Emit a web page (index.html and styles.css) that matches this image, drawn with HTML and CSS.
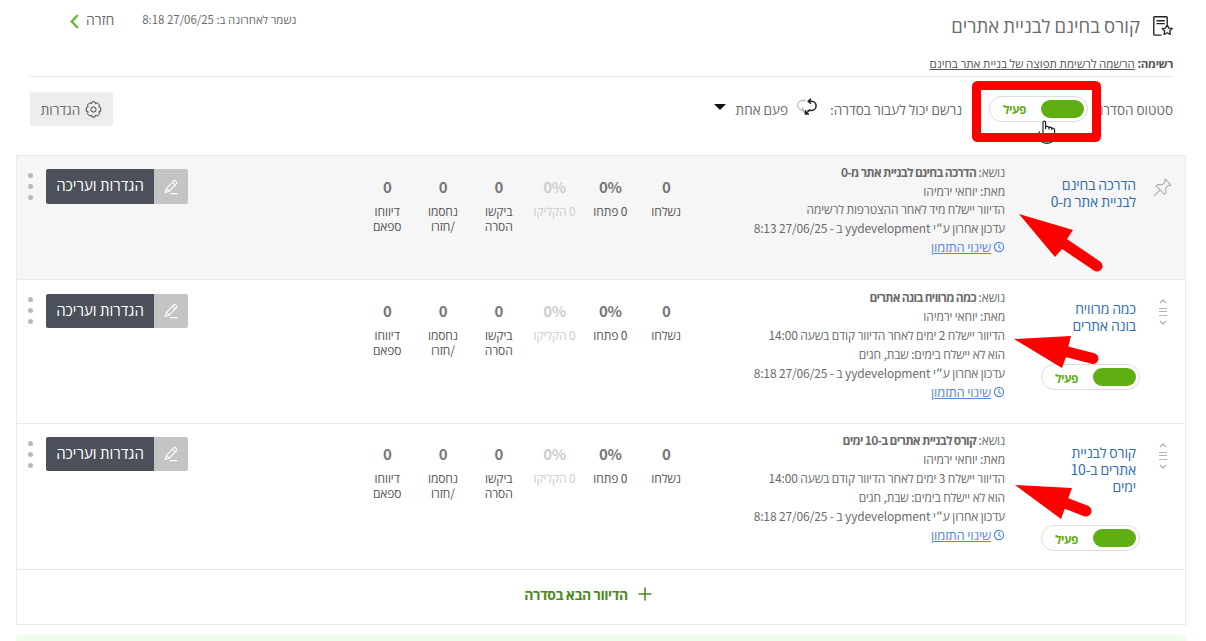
FILE: index.html
```html
<!DOCTYPE html>
<html lang="he" dir="rtl">
<head>
  <meta charset="UTF-8">
  <meta name="viewport" content="width=device-width, initial-scale=1.0">
  <link rel="stylesheet" href="styles.css">
  <title>קורס בחינם לבניית אתרים</title>
</head>
<body>
  <svg class="defs" width="0" height="0">
    <symbol id="pencil" viewBox="0 0 16 16">
      <path d="M3.3 9.6 10.6 1.8q.8-.8 1.7 0l1.2 1.1q.8.8 0 1.7L6.2 12.2 2 13.6zM3.3 9.6l2.9 2.6M9.4 3.2l2.8 2.6M7 14.6h7.5" fill="none" stroke="#fff" stroke-width="1.1" stroke-linejoin="round" />
    </symbol>
    <symbol id="clock" viewBox="0 0 12 12">
      <circle cx="6" cy="6" r="4.6" fill="none" stroke="#4f8bd6" stroke-width="1.2" />
      <path d="M6 3v3.4l2 1" fill="none" stroke="#4f8bd6" stroke-width="1.1" />
    </symbol>
    <symbol id="drag" viewBox="0 0 10 26">
      <path d="M2 4l3-3 3 3M2 22l3 3 3-3" fill="none" stroke="#aaa" stroke-width="1.1" />
      <path d="M1 9.5h8M1 12.5h8M1 16.5h8" fill="none" stroke="#b5b5b5" stroke-width="1" />
    </symbol>
  </svg>

  <div class="header">
    <div class="header-top">
      <svg class="page-icon" viewBox="0 0 19 21">
        <path d="M13.5 8V1.5q0-.8-.8-.8H1.5q-.8 0-.8.8v16q0 .8.8.8H8M3.3 4.5h7.8M3.3 7.3h7.8" fill="none" stroke="#222" stroke-width="1.3" />
        <path d="M13.500 8.500l1.500 3 3.300.5-2.400 2.300.6 3.300-3-1.600-3 1.600.6-3.300L8.700 12l3.300-.5z" fill="#fff" stroke="#222" stroke-width="1.200" stroke-linejoin="round" />
      </svg>
      <h1 class="title">קורס בחינם לבניית אתרים</h1>
      <div class="saved">נשמר לאחרונה ב: 27/06/25 8:18</div>
      <a class="back">חזרה
        <svg width="9" height="15" viewBox="0 0 9 15"><path d="M7.800 1 1.800 7.500l6 6.500" fill="none" stroke="#6fb544" stroke-width="2.500" /></svg>
      </a>
    </div>
    <div class="list-name"><b>רשימה:</b> <u>הרשמה לרשימת תפוצה של בניית אתר בחינם</u></div>
    <div class="status-bar">
      <span class="status-label">סטטוס הסדרה:</span>
      <div class="toggle"><i></i><span>פעיל</span></div>
      <span class="pass-label">נרשם יכול לעבור בסדרה:</span>
      <svg class="repeat" viewBox="0 0 20 17">
        <path d="M9 2.500H5.500a4.700 4.700 0 0 0 0 9.500h1.500M6 9l-1 3 3 3" fill="none" stroke="#b8bcc2" stroke-width="1.300" />
        <path d="M14 .8 11.200 3.200 14 5.800M11.500 3.200h3a4.600 4.600 0 0 1 0 9.200H10.500M13 11.500l-4.500 4.500M8.500 12v4h3.500" fill="none" stroke="#222" stroke-width="1.500" />
      </svg>
      <span class="once">פעם אחת</span>
      <span class="caret"></span>
      <a class="settings">
        <svg width="17" height="17" viewBox="0 0 17 17">
          <path d="M7.100 .2h2.800l.6 1.800 1.800-.8 2.300 2.300-.8 1.800 1.900.7v3.600l-1.900.6.8 1.900-2.300 2.300-1.800-.8-.6 1.900H7.100l-.6-1.900-1.800.8-2.300-2.300.8-1.900L1.300 9.600V6l1.900-.7-.8-1.800 2.300-2.300 1.800.8z" transform="translate(0 .6)" fill="none" stroke="#444" stroke-width="1" stroke-linejoin="round" />
          <circle cx="8.500" cy="8.500" r="2.600" fill="none" stroke="#444" />
        </svg>
        הגדרות
      </a>
    </div>
  </div>

  <div class="series">
    <div class="row first">
      <div class="handle">
        <svg class="pin" viewBox="0 0 18 18"><path d="M11.500 1l5.500 5.500-1.300.7-1.200-.3-2.600 3.200.3 4.200-1.300 1.200L3 7.500l1.200-1.300 4.300.3 3-2.700-.4-1.500zM6.500 11.500 1 17" fill="none" stroke="#aaa" stroke-width="1" /></svg>
      </div>
      <div class="name"><a>הדרכה בחינם<br>לבניית אתר מ-0</a></div>
      <div class="details">
        <p>נושא: <b>הדרכה בחינם לבניית אתר מ-0</b></p>
        <p>מאת: יוחאי ירמיהו</p>
        <p>הדיוור יישלח מיד לאחר ההצטרפות לרשימה</p>
        <p>עדכון אחרון ע״י yydevelopment ב - 27/06/25 8:13</p>
        <p class="timing"><svg width="12" height="12"><use href="#clock" /></svg><a>שינוי התזמון</a></p>
      </div>
      <div class="stats">
        <div><strong>0</strong>נשלחו</div>
        <div><strong>0%</strong>0 פתחו</div>
        <div class="off"><strong>0%</strong>0 הקליקו</div>
        <div><strong>0</strong>ביקשו<br>הסרה</div>
        <div><strong>0</strong>נחסמו<br>/חזרו</div>
        <div><strong>0</strong>דיווחו<br>ספאם</div>
      </div>
      <div class="actions">
        <a class="edit"><span class="edit-icon"><svg width="16" height="16"><use href="#pencil" /></svg></span><span class="edit-text">הגדרות ועריכה</span></a>
        <div class="dots"><i></i><i></i><i></i></div>
      </div>
    </div>

    <div class="row second">
      <div class="handle"><svg class="drag" viewBox="0 0 10 26"><use href="#drag" /></svg></div>
      <div class="name"><a>כמה מרוויח<br>בונה אתרים</a>
        <div class="toggle"><i></i><span>פעיל</span></div>
      </div>
      <div class="details">
        <p>נושא: <b>כמה מרוויח בונה אתרים</b></p>
        <p>מאת: יוחאי ירמיהו</p>
        <p>הדיוור יישלח 2 ימים לאחר הדיוור קודם בשעה 14:00</p>
        <p>הוא לא יישלח בימים: שבת, חגים</p>
        <p>עדכון אחרון ע״י yydevelopment ב - 27/06/25 8:18</p>
        <p class="timing"><svg width="12" height="12"><use href="#clock" /></svg><a>שינוי התזמון</a></p>
      </div>
      <div class="stats">
        <div><strong>0</strong>נשלחו</div>
        <div><strong>0%</strong>0 פתחו</div>
        <div class="off"><strong>0%</strong>0 הקליקו</div>
        <div><strong>0</strong>ביקשו<br>הסרה</div>
        <div><strong>0</strong>נחסמו<br>/חזרו</div>
        <div><strong>0</strong>דיווחו<br>ספאם</div>
      </div>
      <div class="actions">
        <a class="edit"><span class="edit-icon"><svg width="16" height="16"><use href="#pencil" /></svg></span><span class="edit-text">הגדרות ועריכה</span></a>
        <div class="dots"><i></i><i></i><i></i></div>
      </div>
    </div>

    <div class="row third">
      <div class="handle"><svg class="drag" viewBox="0 0 10 26"><use href="#drag" /></svg></div>
      <div class="name"><a>קורס לבניית<br>אתרים ב-10<br>ימים</a>
        <div class="toggle"><i></i><span>פעיל</span></div>
      </div>
      <div class="details">
        <p>נושא: <b>קורס לבניית אתרים ב-10 ימים</b></p>
        <p>מאת: יוחאי ירמיהו</p>
        <p>הדיוור יישלח 3 ימים לאחר הדיוור קודם בשעה 14:00</p>
        <p>הוא לא יישלח בימים: שבת, חגים</p>
        <p>עדכון אחרון ע״י yydevelopment ב - 27/06/25 8:18</p>
        <p class="timing"><svg width="12" height="12"><use href="#clock" /></svg><a>שינוי התזמון</a></p>
      </div>
      <div class="stats">
        <div><strong>0</strong>נשלחו</div>
        <div><strong>0%</strong>0 פתחו</div>
        <div class="off"><strong>0%</strong>0 הקליקו</div>
        <div><strong>0</strong>ביקשו<br>הסרה</div>
        <div><strong>0</strong>נחסמו<br>/חזרו</div>
        <div><strong>0</strong>דיווחו<br>ספאם</div>
      </div>
      <div class="actions">
        <a class="edit"><span class="edit-icon"><svg width="16" height="16"><use href="#pencil" /></svg></span><span class="edit-text">הגדרות ועריכה</span></a>
        <div class="dots"><i></i><i></i><i></i></div>
      </div>
    </div>

    <div class="add-row">
      <svg width="14" height="14" viewBox="0 0 14 14"><path d="M7 .5v13M.5 7h13" stroke="#4d8a1c" stroke-width="1.600" /></svg>
      <span>הדיוור הבא בסדרה</span>
    </div>
  </div>
  <div class="green-bar"></div>

  <!-- red marks and mouse pointer over the page -->
  <svg class="marks" width="1206" height="641" viewBox="0 0 1206 641">
    <path d="M1042 142q5 2.500 10 0" fill="none" stroke="#222" stroke-width="1.300" />
    <path d="M1043.500 133v-10.500q0-1.500 1.200-1.500t1.200 1.500v5.500q2.500-.8 3 .8 2.300-.6 2.800 1 2.600-.2 2.800 2v1.200h-14z" fill="#fff" stroke="none" />
    <path d="M1039.500 133l-.5-1.500M1043 133v-10.500q0-1.500 1.300-1.500t1.300 1.500v6.500M1046 126.500q2.500-.5 3 1v2M1049 127.200q2.300-.4 2.800 1v1.800M1052 128q2.600 0 2.600 2v3.500" fill="none" stroke="#111" stroke-width="1.100" />
    <rect x="976.500" y="85.500" width="120" height="52" rx="1" fill="none" stroke="#f00" stroke-width="9" stroke-linejoin="round" />
    <g fill="#f00" stroke="#f00">
      <path d="M1019 214l54 16-6 9-5 10-7 8z" stroke="none" />
      <path d="M1060 241l37 25" stroke-width="11" stroke-linecap="round" />
      <path d="M1014 339l57-3-3 12-2 9-4 11z" stroke="none" />
      <path d="M1060 350l33 8.500" stroke-width="11" stroke-linecap="round" />
      <path d="M1015 485l57 3-4 11-3 9-4 11z" stroke="none" />
      <path d="M1060 501l26 10" stroke-width="11" stroke-linecap="round" />
    </g>
  </svg>
</body>
</html>
```

FILE: styles.css
```css
* {
  box-sizing: border-box;
}
body {
  margin: 0;
  height: 641px;
  overflow: hidden;
  background: #fff;
  color: #6b6b6b;
  font-family: "Noto Sans CJK JP", "Open Sans", sans-serif;
  font-size: 12px;
}
p, h1 {
  margin: 0;
  font-weight: normal;
}
svg {
  flex: none;
}
.defs {
  position: absolute;
}

/* header */
.header {
  height: 155px;
  padding: 0 33px 0 30px;
}
.header-top {
  display: flex;
  height: 53px;
  padding-top: 9px;
}
.page-icon {
  width: 20px;
  height: 22px;
  margin-top: 7px;
}
.title {
  margin-right: 13px;
  font-size: 18.5px;
  line-height: 32px;
  white-space: nowrap;
}
.saved {
  margin-right: auto;
  font-size: 11.4px;
  line-height: 21px;
}
.back {
  display: flex;
  align-items: center;
  gap: 7px;
  height: 20px;
  margin: 0 28px 0 40px;
  font-size: 14px;
}
.back svg {
  margin-top: 5px;
}
.list-name {
  height: 24px;
  border-bottom: 1px solid #e8e8e8;
  font-size: 11.6px;
  line-height: 21px;
  color: #555;
}
.list-name b {
  letter-spacing: -.4px;
}
.status-bar {
  display: flex;
  align-items: center;
  height: 63px;
  font-size: 13.5px;
  white-space: nowrap;
}
.status-label {
  width: 85px;
}
.pass-label {
  width: 133px;
  margin-right: 27px;
}
.repeat {
  width: 20px;
  height: 17px;
  margin: 0 12px 4px 9px;
}
.caret {
  margin-right: 10px;
  margin-bottom: 4px;
  border: 6px solid transparent;
  border-top-color: #111;
  border-bottom: 0;
}
.settings {
  display: flex;
  align-items: center;
  justify-content: center;
  gap: 5px;
  width: 83px;
  height: 34px;
  margin-right: auto;
  margin-top: 1px;
  border-radius: 2px;
  background: #ededed;
}
.toggle {
  display: flex;
  align-items: center;
  width: 99px;
  height: 26px;
  padding: 0 3px;
  border: 1px solid #ddd;
  border-radius: 13px;
  background: #fff;
  font-size: 12px;
  font-weight: bold;
  letter-spacing: -.5px;
  color: #5fae12;
}
.toggle i {
  width: 43px;
  height: 18px;
  margin-left: 15px;
  border-radius: 9px;
  background: #5fae12;
}

/* mailing rows */
.series {
  margin: 0 20px 0 16px;
  border: 1px solid #eaeaea;
  border-bottom: 0;
}
.row {
  display: flex;
  border-bottom: 1px solid #eaeaea;
}
.first {
  height: 124px;
  background: #f6f6f7;
}
.second {
  height: 144px;
}
.third {
  height: 146px;
}
.handle {
  width: 49px;
  padding-right: 13px;
}
.pin {
  width: 19px;
  height: 19px;
  margin-top: 22px;
}
.drag {
  width: 10px;
  height: 26px;
  margin: 19px 4px 0 0;
}
.name {
  width: 131px;
  padding-top: 20px;
  font-size: 14px;
  line-height: 17px;
  letter-spacing: -.15px;
  color: #2f6cad;
}
.name .toggle {
  margin: 30px -4px 0 0;
}
.details {
  width: 311px;
  padding-top: 7px;
  line-height: 19px;
  letter-spacing: -.14px;
  white-space: nowrap;
}
.first .details {
  line-height: 18.7px;
}
.third .details {
  padding-top: 6px;
}
.details b {
  letter-spacing: -.7px;
}
.timing {
  display: flex;
  align-items: center;
  gap: 2px;
  font-size: 13px;
  color: #4f8bd6;
}
.timing a {
  text-decoration: underline;
}
.stats {
  display: flex;
  padding-top: 21px;
  line-height: 15px;
  text-align: center;
  color: #555;
}
.third .stats {
  padding-top: 20px;
}
.stats div {
  width: 55.8px;
  letter-spacing: -.1px;
  white-space: nowrap;
}
.stats strong {
  display: block;
  margin-bottom: 6px;
  font-size: 15px;
  line-height: 20px;
  letter-spacing: -.4px;
  color: #777;
  direction: ltr;
}
.stats .off, .off strong {
  color: #ccc;
}
.actions {
  display: flex;
  margin-right: auto;
  padding-top: 13px;
}
.edit {
  display: flex;
  height: 35px;
  border-radius: 2px;
  overflow: hidden;
  color: #fff;
  font-size: 15px;
  line-height: 32px;
}
.second .actions {
  padding-top: 14px;
}
.second .edit, .third .edit {
  height: 34px;
}
.edit-icon {
  display: flex;
  align-items: center;
  justify-content: center;
  width: 34px;
  background: #c4c4c4;
}
.edit-text {
  width: 108px;
  background: #4b505a;
  text-align: center;
}
.dots {
  display: flex;
  flex-direction: column;
  gap: 6px;
  width: 29px;
  padding: 4px 13px 0 0;
}
.second .dots {
  padding-top: 3px;
}
.dots i {
  width: 5px;
  height: 5px;
  border-radius: 50%;
  background: #b9b9b9;
}
.add-row {
  display: flex;
  align-items: center;
  justify-content: center;
  gap: 10px;
  height: 55px;
  padding: 0 26px 6px 0;
  border-bottom: 1px solid #eaeaea;
  font-size: 14px;
  font-weight: bold;
  letter-spacing: -.45px;
  color: #4d8a1c;
}
.green-bar {
  height: 6px;
  margin: 10px 20px 0 16px;
  background: #f0ffeb;
}
.marks {
  position: absolute;
  top: 0;
  left: 0;
}
```
